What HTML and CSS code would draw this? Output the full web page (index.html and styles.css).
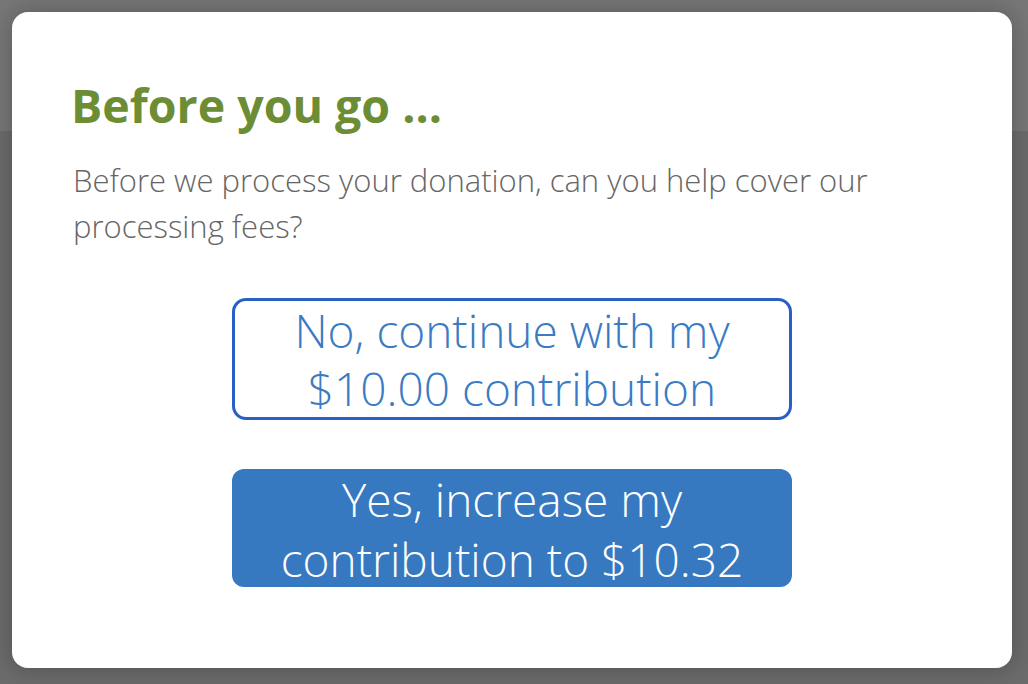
FILE: index.html
```html
<!DOCTYPE html>
<html lang="en">

<head>
    <meta charset="UTF-8">
    <meta name="viewport" content="width=device-width, initial-scale=1.0">
    <title>Before you go</title>
    <link rel="stylesheet" href="styles.css">
</head>

<body>
    <header class="page-header"></header>
    <main class="page-body"></main>

    <div class="modal">
        <h1 class="modal-title">Before you go ...</h1>
        <p class="modal-text">Before we process your donation, can you help cover our processing fees?</p>
        <div class="modal-actions">
            <button class="btn btn-outline">No, continue with my $10.00 contribution</button>
            <button class="btn btn-fill">Yes, increase my contribution to $10.32</button>
        </div>
    </div>
</body>

</html>
```

FILE: styles.css
```css
* {
    box-sizing: border-box;
}

body {
    margin: 0;
    height: 684px;
    overflow: hidden;
    background: #6b6b6b;
    font-family: "Open Sans", "Liberation Sans", sans-serif;
}

.page-header {
    height: 131px;
    background: #777777;
}

.modal {
    position: absolute;
    top: 12px;
    left: 12px;
    width: 1000px;
    height: 656px;
    padding: 67px 60px 0 61px;
    background: #ffffff;
    border-radius: 16px;
    box-shadow: 0 0 24px rgba(0, 0, 0, 0.25);
}

.modal-title {
    margin: 0 0 0 -2px;
    font-size: 46.5px;
    line-height: 53px;
    font-weight: 700;
    color: #6c8d34;
}

.modal-text {
    margin: 25px 0 0;
    font-size: 31px;
    line-height: 46px;
    font-weight: 300;
    color: #666666;
}

.modal-actions {
    display: flex;
    flex-direction: column;
    align-items: center;
    gap: 49px;
    margin-top: 49px;
    margin-left: -1px;
}

.btn {
    width: 560px;
    padding: 0 30px;
    font-family: inherit;
    font-size: 46px;
    font-weight: 300;
    border-radius: 14px;
    cursor: pointer;
}

.btn-outline {
    height: 122px;
    line-height: 58px;
    border: 3px solid #2a5fc5;
    background: #ffffff;
    color: #3a7bc4;
}

.btn-fill {
    height: 118px;
    line-height: 60px;
    border: 0;
    background: #3679c1;
    color: #ffffff;
    border-radius: 12px;
}
```
